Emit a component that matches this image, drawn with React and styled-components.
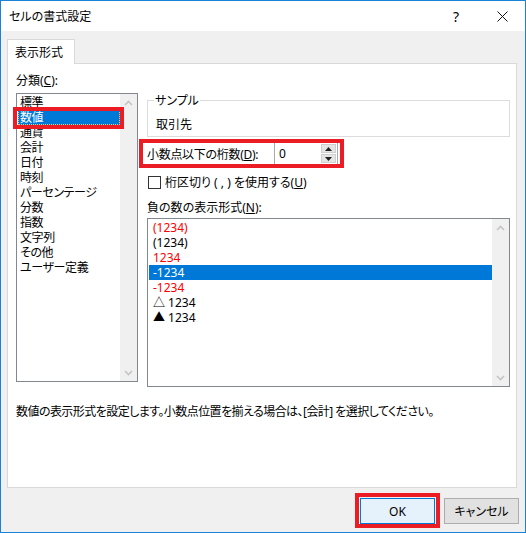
import React from "react";
import styled, { createGlobalStyle, css } from "styled-components";

const GlobalStyle = createGlobalStyle`
  html, body { margin: 0; padding: 0; background: #fff; }
  body {
    font-family: "Noto Sans", "Noto Sans CJK JP", sans-serif;
    font-size: 12px;
    color: #000;
    font-feature-settings: "palt";
  }
  * { box-sizing: border-box; }
`;

const RED = "#ec1c24";

const marked = css`
  &::after {
    content: "";
    position: absolute;
    left: ${(p) => p.$m[0]}px;
    top: ${(p) => p.$m[1]}px;
    right: ${(p) => p.$m[2]}px;
    bottom: ${(p) => p.$m[3]}px;
    border: 4px solid ${RED};
    pointer-events: none;
    z-index: 2;
  }
`;

const Window = styled.div`
  width: 526px;
  height: 533px;
  border: 1px solid #1883d7;
  background: #f0f0f0;
  display: flex;
  flex-direction: column;
`;

const TitleBar = styled.div`
  height: 30px;
  background: #fff;
  display: flex;
  align-items: center;
  padding-left: 8px;
  flex-shrink: 0;
`;

const Title = styled.div`
  flex: 1;
  line-height: 15px;
  font-size: 12px;
`;

const CaptionButton = styled.div`
  width: 46px;
  height: 30px;
  display: flex;
  align-items: center;
  justify-content: center;
  font-family: "Noto Sans", sans-serif;
  font-size: 14px;
`;

const Body = styled.div`
  flex: 1;
  display: flex;
  flex-direction: column;
  padding: 8px 6px 0 6px;
`;

const TabStrip = styled.div`
  display: flex;
`;

const Tab = styled.div`
  position: relative;
  z-index: 1;
  width: 68px;
  height: 25px;
  margin-bottom: -1px;
  background: #fff;
  border: 1px solid #d9d9d9;
  border-bottom: none;
  display: flex;
  align-items: center;
  padding-left: 7px;
  line-height: 15px;
`;

const Panel = styled.div`
  width: 510px;
  height: 425px;
  background: #fff;
  border: 1px solid #d9d9d9;
  padding: 9px 0 0 8px;
  display: flex;
  flex-direction: column;
`;

const Columns = styled.div`
  display: grid;
  grid-template-columns: 122px 363px;
  column-gap: 9px;
  align-items: start;
`;

const Column = styled.div`
  display: flex;
  flex-direction: column;
`;

const Label = styled.div`
  height: 15px;
  line-height: 15px;
  white-space: nowrap;
  margin-top: ${(p) => p.$mt || 0}px;
`;

const Key = styled.span`
  text-decoration: underline;
  text-underline-offset: 1px;
`;

const ListBox = styled.div`
  display: flex;
  height: ${(p) => p.$h}px;
  margin-top: ${(p) => p.$mt}px;
  border: 1px solid #828790;
  background: #fff;
`;

const ListItems = styled.div`
  flex: 1;
  display: flex;
  flex-direction: column;
  padding: 1px 0 0 1px;
  letter-spacing: ${(p) => p.$ls || 0}px;
`;

const ListItem = styled.div`
  position: relative;
  height: 15px;
  line-height: 15px;
  white-space: nowrap;
  padding-left: ${(p) => p.$indent}px;
  color: ${(p) => (p.$selected ? "#fff" : p.$red ? "#ff0000" : "#000")};
  background: ${(p) => (p.$selected ? "#0078d7" : "transparent")};
  ${(p) =>
    p.$focus &&
    css`
      outline: 1px dotted #f0c870;
      outline-offset: -1px;
    `}
  ${(p) => p.$m && marked}
`;

const ScrollBar = styled.div`
  width: 17px;
  background: #f0f0f0;
  display: flex;
  flex-direction: column;
  justify-content: space-between;
`;

const ScrollArrow = styled.div`
  height: 17px;
  display: flex;
  align-items: center;
  justify-content: center;
`;

const Group = styled.div`
  position: relative;
  margin-top: 27px;
  height: 37px;
  border: 1px solid #dcdcdc;
  padding: 16px 0 0 8px;
  line-height: 15px;
`;

const Legend = styled.span`
  position: absolute;
  left: 6px;
  top: -8px;
  padding: 0 1px;
  background: #fff;
  line-height: 15px;
`;

const DecimalRow = styled.div`
  position: relative;
  margin-top: 5px;
  width: 191px;
  height: 23px;
  display: flex;
  align-items: center;
  ${marked}
`;

const RowLabel = styled.div`
  width: 127px;
  line-height: 15px;
  padding-top: 2px;
  white-space: nowrap;
  letter-spacing: -0.3px;
`;

const SpinBox = styled.div`
  width: 64px;
  height: 23px;
  border: 1px solid #a9a9a9;
  background: #fff;
  display: flex;
`;

const SpinValue = styled.div`
  flex: 1;
  padding-left: 4px;
  line-height: 21px;
  font-size: 12px;
`;

const SpinButtons = styled.div`
  width: 15px;
  margin: 1px 1px 1px 0;
  display: flex;
  flex-direction: column;
  gap: 1px;
`;

const SpinButton = styled.div`
  flex: 1;
  background: #e5e5e5;
  border: 1px solid #cfcfcf;
  display: flex;
  align-items: center;
  justify-content: center;
`;

const CheckRow = styled.div`
  margin-top: 10px;
  height: 15px;
  display: flex;
  align-items: center;
  gap: 4px;
  padding-left: 1px;
  line-height: 15px;
  white-space: nowrap;
`;

const CheckBox = styled.div`
  width: 13px;
  height: 13px;
  border: 1px solid #333;
  background: #fff;
  flex-shrink: 0;
`;

const Description = styled.div`
  margin-top: 17px;
  line-height: 15px;
  white-space: nowrap;
  letter-spacing: -0.55px;
`;

const Footer = styled.div`
  display: flex;
  justify-content: flex-end;
  gap: 9px;
  margin-top: 10px;
`;

const Button = styled.div`
  position: relative;
  width: 75px;
  height: 26px;
  display: flex;
  align-items: center;
  justify-content: center;
  line-height: 15px;
  background: ${(p) => (p.$default ? "#e5f1fb" : "#e1e1e1")};
  border: 1px solid ${(p) => (p.$default ? "#0078d7" : "#adadad")};
  ${(p) => p.$m && marked}
`;

const Chevron = ({ up }) => (
  <svg width="9" height="6" viewBox="0 0 9 6">
    <path
      d={up ? "M1 5 L4.5 1.5 L8 5" : "M1 1 L4.5 4.5 L8 1"}
      fill="none"
      stroke="#c4c4c4"
      strokeWidth="1.6"
    />
  </svg>
);

const Tri = ({ up }) => (
  <svg width="7" height="4" viewBox="0 0 7 4">
    <path d={up ? "M0 4 L3.5 0 L7 4 Z" : "M0 0 L3.5 4 L7 0 Z"} fill="#222" />
  </svg>
);

const Scroll = () => (
  <ScrollBar>
    <ScrollArrow>
      <Chevron up />
    </ScrollArrow>
    <ScrollArrow>
      <Chevron />
    </ScrollArrow>
  </ScrollBar>
);

const categories = [
  "標準",
  "数値",
  "通貨",
  "会計",
  "日付",
  "時刻",
  "パーセンテージ",
  "分数",
  "指数",
  "文字列",
  "その他",
  "ユーザー定義",
];

const negatives = [
  { t: "(1234)", red: true },
  { t: "(1234)" },
  { t: "1234", red: true },
  { t: "-1234", selected: true },
  { t: "-1234", red: true },
  { t: "△ 1234" },
  { t: "▲ 1234" },
];

export default function App() {
  return (
    <>
      <GlobalStyle />
      <Window>
        <TitleBar>
          <Title>セルの書式設定</Title>
          <CaptionButton>?</CaptionButton>
          <CaptionButton>
            <svg width="11" height="11" viewBox="0 0 11 11">
              <path d="M0.5 0.5 L10.5 10.5 M10.5 0.5 L0.5 10.5" stroke="#111" strokeWidth="1" />
            </svg>
          </CaptionButton>
        </TitleBar>
        <Body>
          <TabStrip>
            <Tab>表示形式</Tab>
          </TabStrip>
          <Panel>
            <Columns>
              <Column>
                <Label>
                  分類(<Key>C</Key>):
                </Label>
                <ListBox $h={289} $mt={5}>
                  <ListItems $ls={-0.4}>
                    {categories.map((c, i) => (
                      <ListItem
                        key={c}
                        $indent={2}
                        $selected={i === 1}
                        $focus={i === 1}
                        $m={i === 1 ? [-5, -3, -4, -4] : null}
                      >
                        {c}
                      </ListItem>
                    ))}
                  </ListItems>
                  <Scroll />
                </ListBox>
              </Column>
              <Column>
                <Group>
                  <Legend>サンプル</Legend>
                  取引先
                </Group>
                <DecimalRow $m={[-8, -3, -6, -3]}>
                  <RowLabel>
                    小数点以下の桁数(<Key>D</Key>):
                  </RowLabel>
                  <SpinBox>
                    <SpinValue>0</SpinValue>
                    <SpinButtons>
                      <SpinButton>
                        <Tri up />
                      </SpinButton>
                      <SpinButton>
                        <Tri />
                      </SpinButton>
                    </SpinButtons>
                  </SpinBox>
                </DecimalRow>
                <CheckRow>
                  <CheckBox />
                  <span>
                    桁区切り ( , ) を使用する(<Key>U</Key>)
                  </span>
                </CheckRow>
                <Label $mt={10}>
                  負の数の表示形式(<Key>N</Key>):
                </Label>
                <ListBox $h={169} $mt={3}>
                  <ListItems>
                    {negatives.map((n, i) => (
                      <ListItem key={i} $indent={4} $red={n.red} $selected={n.selected}>
                        {n.t}
                      </ListItem>
                    ))}
                  </ListItems>
                  <Scroll />
                </ListBox>
              </Column>
            </Columns>
            <Description>
              数値の表示形式を設定します。小数点位置を揃える場合は、[会計] を選択してください。
            </Description>
          </Panel>
          <Footer>
            <Button $default $m={[-6, -6, -6, -5]}>
              OK
            </Button>
            <Button>キャンセル</Button>
          </Footer>
        </Body>
      </Window>
    </>
  );
}
